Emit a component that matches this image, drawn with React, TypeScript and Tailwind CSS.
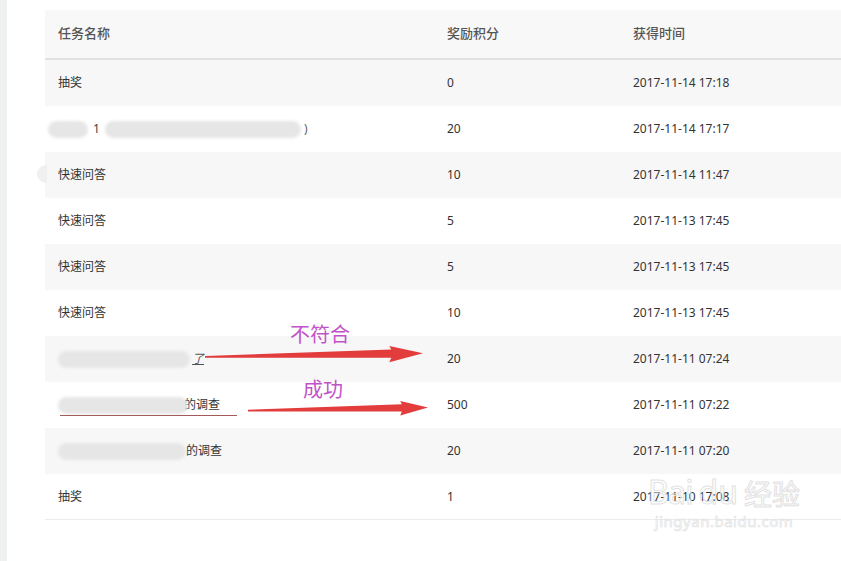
import React from "react";

type Row = {
  name: React.ReactNode;
  points: string;
  time: string;
};

function Blur({ className }: { className: string }) {
  return <span className={`inline-block rounded-full bg-[#e6e6e6] blur-[1.5px] ${className}`} />;
}

const rows: Row[] = [
  { name: "抽奖", points: "0", time: "2017-11-14 17:18" },
  {
    name: (
      <span className="-ml-[10px] flex items-center">
        <Blur className="h-[17px] w-[40px]" />
        <span className="ml-[5px] mr-[5px] text-[#444]">1</span>
        <Blur className="h-[17px] w-[196px]" />
        <span className="ml-[3px] text-[#666]">)</span>
      </span>
    ),
    points: "20",
    time: "2017-11-14 17:17",
  },
  { name: "快速问答", points: "10", time: "2017-11-14 11:47" },
  { name: "快速问答", points: "5", time: "2017-11-13 17:45" },
  { name: "快速问答", points: "5", time: "2017-11-13 17:45" },
  { name: "快速问答", points: "10", time: "2017-11-13 17:45" },
  {
    name: (
      <span className="flex items-center">
        <Blur className="h-[17px] w-[132px]" />
        <span className="ml-[2px] italic text-[#555] underline">了</span>
      </span>
    ),
    points: "20",
    time: "2017-11-11 07:24",
  },
  {
    name: (
      <span className="relative flex items-center">
        <Blur className="h-[17px] w-[130px]" />
        <span className="-ml-[4px]">的调查</span>
        <span className="absolute left-[2px] top-[19px] h-px w-[177px] bg-[#a55a5a]" />
      </span>
    ),
    points: "500",
    time: "2017-11-11 07:22",
  },
  {
    name: (
      <span className="flex items-center">
        <Blur className="h-[17px] w-[128px]" />
        <span>的调查</span>
      </span>
    ),
    points: "20",
    time: "2017-11-11 07:20",
  },
  { name: "抽奖", points: "1", time: "2017-11-10 17:08" },
];

function Arrow({ className }: { className: string }) {
  return (
    <svg className={`absolute ${className}`} viewBox="0 0 220 20" preserveAspectRatio="none">
      <polygon points="0,11 188,4 186,0 220,8 186,18 188,13 0,13" fill="#e23c3c" />
    </svg>
  );
}

export default function App() {
  return (
    <div className="relative h-[561px] w-[841px] overflow-hidden bg-white font-['Noto_Sans','Noto_Sans_CJK_SC',sans-serif] text-[12px] text-[#333]">
      <div className="flex h-full">
        <div className="w-[7px] shrink-0 bg-[#eef1f0]" />
        <div className="flex-1 pl-[38px] pt-[10px]">
          <div className="grid grid-cols-[389px_186px_1fr] border-b-2 border-[#e2e2e2] bg-[#f8f8f9] text-[13px] font-medium text-[#555]">
            <div className="flex h-[48px] items-center pl-[13px]">任务名称</div>
            <div className="flex h-[48px] items-center pl-[13px]">奖励积分</div>
            <div className="flex h-[48px] items-center pl-[13px]">获得时间</div>
          </div>
          {rows.map((r, i) => (
            <div
              key={i}
              className={`grid h-[46px] grid-cols-[389px_186px_1fr] items-center ${
                i % 2 === 0 ? "bg-[#f7f7f7]" : "bg-white"
              } ${i === rows.length - 1 ? "border-b border-[#ececec]" : ""}`}
            >
              <div className="flex items-center pl-[13px]">{r.name}</div>
              <div className="pl-[13px]">{r.points}</div>
              <div className="pl-[13px]">{r.time}</div>
            </div>
          ))}
        </div>
      </div>

      <span className="absolute left-[37px] top-[165px] h-[18px] w-[10px] rounded-l-full bg-[#f0f0f0]" />

      {/* annotations */}
      <span className="absolute left-[290px] top-[325px] text-[20px] leading-none text-[#c152c9]">不符合</span>
      <Arrow className="left-[205px] top-[346px] h-[18px] w-[218px]" />
      <span className="absolute left-[303px] top-[380px] text-[20px] leading-none text-[#c152c9]">成功</span>
      <Arrow className="left-[248px] top-[401px] h-[16px] w-[180px]" />

      {/* watermark */}
      <div className="pointer-events-none absolute left-[648px] top-[476px] flex flex-col items-center">
        <div className="flex items-end gap-[6px]">
          <span className="text-[32px] leading-none tracking-tight text-white/0 [-webkit-text-stroke:1px_#e2e2e2]">Bai</span>
          <span className="text-[32px] leading-none text-white/0 [-webkit-text-stroke:1px_#e2e2e2]">du</span>
          <span className="text-[28px] leading-none text-white/0 [-webkit-text-stroke:1px_#e2e2e2]">经验</span>
        </div>
        <span className="mt-[6px] text-[15px] leading-none tracking-[0.5px] text-white/0 [-webkit-text-stroke:0.7px_#e2e2e2]">jingyan.baidu.com</span>
      </div>
    </div>
  );
}
